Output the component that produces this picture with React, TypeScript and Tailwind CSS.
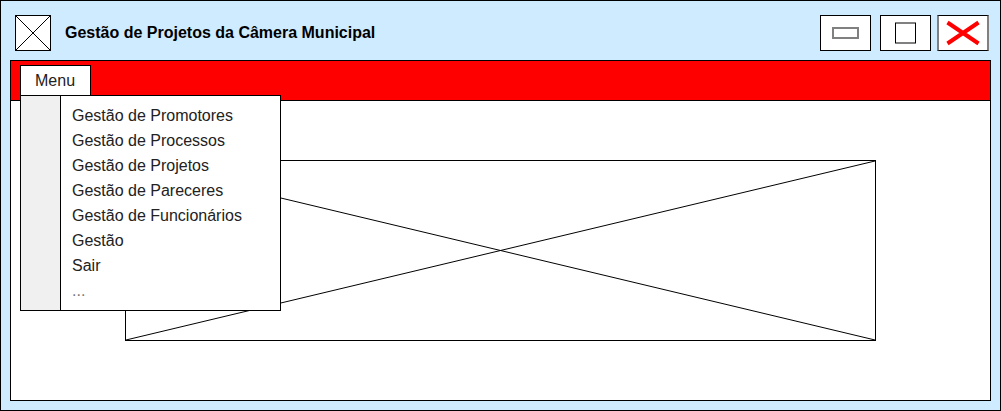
import { useState } from "react";

const menuItems = [
  "Gestão de Promotores",
  "Gestão de Processos",
  "Gestão de Projetos",
  "Gestão de Pareceres",
  "Gestão de Funcionários",
  "Gestão",
  "Sair",
];

function CrossedBox({ className }: { className: string }) {
  return (
    <div className={`relative border border-black bg-white ${className}`} aria-hidden="true">
      <svg className="absolute inset-0 size-full" viewBox="0 0 100 100" preserveAspectRatio="none">
        <path d="M0 0L100 100M0 100L100 0" fill="none" stroke="#000" vectorEffect="non-scaling-stroke" />
      </svg>
    </div>
  );
}

function TitleBar() {
  return (
    <header className="flex items-center pt-[14px] pr-[2px] pb-[9px] pl-[5px]">
      <CrossedBox className="size-9 shrink-0" />
      <h1 className="ml-[14px] flex-1 text-[16px] leading-6 font-bold">
        Gestão de Projetos da Câmera Municipal
      </h1>
      <div className="flex">
        <button
          type="button"
          aria-label="Minimizar"
          className="flex h-9 w-[51px] items-center justify-center border border-black bg-white"
        >
          <svg width="27" height="12" viewBox="0 0 27 12">
            <rect x="1" y="1" width="25" height="10" fill="none" stroke="#808080" strokeWidth="2" />
          </svg>
        </button>
        <button
          type="button"
          aria-label="Maximizar"
          className="ml-[9px] flex h-9 w-[51px] items-center justify-center border border-black bg-white"
        >
          <svg width="21" height="22" viewBox="0 0 21 22">
            <path d="M0 1H21M0 21H21" stroke="#808080" strokeWidth="2" />
            <path d="M0.5 1V21M20.5 1V21" stroke="#000" />
          </svg>
        </button>
        <button
          type="button"
          aria-label="Fechar"
          className="ml-[6px] flex h-9 w-[52px] items-center justify-center border-x-2 border-y border-x-[#808080] border-y-black bg-white"
        >
          <svg width="36" height="26" viewBox="0 0 36 26">
            <path d="M2.5 2.5L33.5 23.5M33.5 2.5L2.5 23.5" stroke="#f00" strokeWidth="4" />
          </svg>
        </button>
      </div>
    </header>
  );
}

function MenuBar() {
  const [open, setOpen] = useState(true);
  return (
    <nav className="flex h-10 border-b border-black bg-[#ff0000] pt-1 pl-[9px]">
      <div className="relative">
        <button
          type="button"
          aria-expanded={open}
          onClick={() => setOpen(!open)}
          className="h-[31px] w-[71px] border border-black bg-white pl-[14px] text-left text-[16px] text-[#222222]"
        >
          Menu
        </button>
        {open && (
          <div className="absolute top-[30px] left-0 z-10 flex w-[261px] border border-black bg-white">
            <div className="w-10 border-r border-black bg-[#f0f0f0]" />
            <ul className="flex-1 py-[7px] text-[16px] leading-[25px] text-[#222222]">
              {menuItems.map((item) => (
                <li key={item}>
                  <button type="button" className="block h-[25px] w-full pl-[11px] text-left">
                    {item}
                  </button>
                </li>
              ))}
              <li>
                <button type="button" className="block h-[25px] w-full pl-[11px] text-left text-[#777777]">
                  ...
                </button>
              </li>
            </ul>
          </div>
        )}
      </div>
    </nav>
  );
}

export default function App() {
  return (
    <div className="flex min-h-screen flex-col border border-black bg-[#cfebff] px-[9px] pb-[9px] font-['Liberation_Sans',Arial,sans-serif] text-black">
      <TitleBar />
      <div className="flex flex-1 flex-col border border-black bg-white">
        <MenuBar />
        <main className="flex flex-1 px-[114px] py-[59px]">
          <CrossedBox className="min-h-[181px] flex-1" />
        </main>
      </div>
    </div>
  );
}
